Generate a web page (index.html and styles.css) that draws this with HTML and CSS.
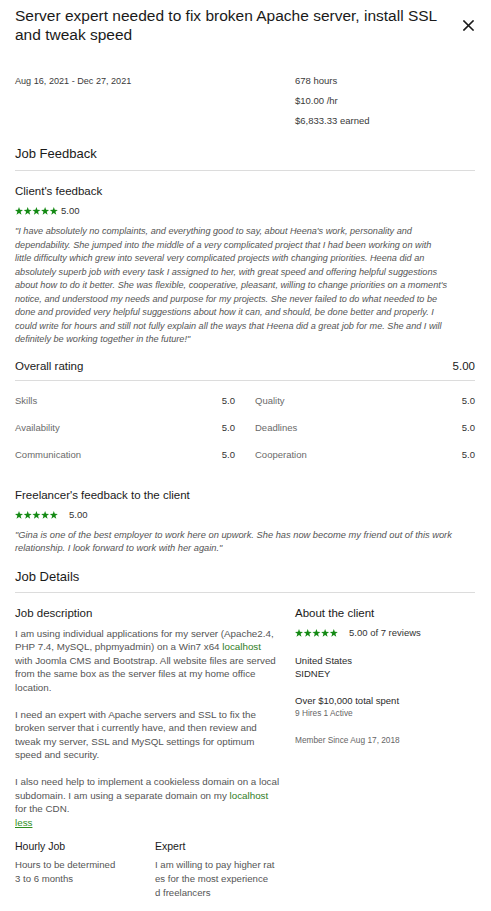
FILE: index.html
```html
<!DOCTYPE html>
<html lang="en">
<head>
<meta charset="utf-8">
<title>Job details</title>
<link rel="stylesheet" href="styles.css">
</head>
<body>
<div class="page">
  <header class="header">
    <h1 class="title">Server expert needed to fix broken Apache server, install SSL and tweak speed</h1>
    <button class="close" aria-label="Close">
      <svg width="11" height="11" viewBox="0 0 11 11"><path d="M1 1L10 10M10 1L1 10" stroke="#1a1a1a" stroke-width="1.6" stroke-linecap="square"/></svg>
    </button>
  </header>

  <section class="meta">
    <div class="meta-left">Aug 16, 2021 - Dec 27, 2021</div>
    <div class="meta-right">
      <div>678 hours</div>
      <div>$10.00 /hr</div>
      <div>$6,833.33 earned</div>
    </div>
  </section>

  <h2 class="section-title">Job Feedback</h2>

  <h3 class="sub-title first">Client's feedback</h3>
  <div class="rating">
    <svg class="stars" width="43" height="8" viewBox="0 0 43 8"><g fill="#148a14"><polygon id="st" points="4,0 5,2.8 8,2.9 5.6,4.8 6.5,7.8 4,6 1.5,7.8 2.4,4.8 0,2.9 3,2.8"/><use href="#st" x="8.7"/><use href="#st" x="17.4"/><use href="#st" x="26.1"/><use href="#st" x="34.8"/></g></svg><span class="score">5.00</span>
  </div>
  <p class="quote">"I have absolutely no complaints, and everything good to say, about Heena's work, personality and<br>dependability. She jumped into the middle of a very complicated project that I had been working on with<br>little difficulty which grew into several very complicated projects with changing priorities. Heena did an<br>absolutely superb job with every task I assigned to her, with great speed and offering helpful suggestions<br>about how to do it better. She was flexible, cooperative, pleasant, willing to change priorities on a moment's<br>notice, and understood my needs and purpose for my projects. She never failed to do what needed to be<br>done and provided very helpful suggestions about how it can, and should, be done better and properly. I<br>could write for hours and still not fully explain all the ways that Heena did a great job for me. She and I will<br>definitely be working together in the future!"</p>

  <div class="overall">
    <span>Overall rating</span>
    <span>5.00</span>
  </div>
  <div class="scores">
    <div class="score-row"><span>Skills</span><span class="val">5.0</span></div>
    <div class="score-row"><span>Quality</span><span class="val">5.0</span></div>
    <div class="score-row"><span>Availability</span><span class="val">5.0</span></div>
    <div class="score-row"><span>Deadlines</span><span class="val">5.0</span></div>
    <div class="score-row"><span>Communication</span><span class="val">5.0</span></div>
    <div class="score-row"><span>Cooperation</span><span class="val">5.0</span></div>
  </div>

  <h3 class="sub-title freelancer">Freelancer's feedback to the client</h3>
  <div class="rating">
    <svg class="stars" width="43" height="8" viewBox="0 0 43 8"><g fill="#148a14"><polygon id="st2" points="4,0 5,2.8 8,2.9 5.6,4.8 6.5,7.8 4,6 1.5,7.8 2.4,4.8 0,2.9 3,2.8"/><use href="#st2" x="8.7"/><use href="#st2" x="17.4"/><use href="#st2" x="26.1"/><use href="#st2" x="34.8"/></g></svg><span class="score wide">5.00</span>
  </div>
  <p class="quote short">"Gina is one of the best employer to work here on upwork. She has now become my friend out of this work relationship. I look forward to work with her again."</p>

  <h2 class="section-title details">Job Details</h2>

  <section class="details-grid">
    <div class="desc">
      <h3 class="sub-title">Job description</h3>
      <div class="desc-text">
        <p>I am using individual applications for my server (Apache2.4, PHP 7.4, MySQL, phpmyadmin) on a Win7 x64 <a class="link" href="#">localhost</a> with Joomla CMS and Bootstrap. All website files are served from the same box as the server files at my home office location.</p>
        <p>I need an expert with Apache servers and SSL to fix the broken server that i currently have, and then review and tweak my server, SSL and MySQL settings for optimum speed and security.</p>
        <p>I also need help to implement a cookieless domain on a local subdomain. I am using a separate domain on my <a class="link" href="#">localhost</a> for the CDN.<br><a class="less" href="#">less</a></p>
      </div>
      <div class="terms">
        <div class="term">
          <h4 class="term-title">Hourly Job</h4>
          <p class="term-text">Hours to be determined<br>3 to 6 months</p>
        </div>
        <div class="term">
          <h4 class="term-title">Expert</h4>
          <p class="term-text tall">I am willing to pay higher rat<br>es for the most experience<br>d freelancers</p>
        </div>
      </div>
    </div>
    <aside class="client">
      <h3 class="sub-title">About the client</h3>
      <div class="rating">
        <svg class="stars" width="43" height="8" viewBox="0 0 43 8"><g fill="#148a14"><polygon id="st3" points="4,0 5,2.8 8,2.9 5.6,4.8 6.5,7.8 4,6 1.5,7.8 2.4,4.8 0,2.9 3,2.8"/><use href="#st3" x="8.7"/><use href="#st3" x="17.4"/><use href="#st3" x="26.1"/><use href="#st3" x="34.8"/></g></svg><span class="score wide">5.00 of 7 reviews</span>
      </div>
      <div class="client-block">
        <div class="strong">United States</div>
        <div class="strong">SIDNEY</div>
      </div>
      <div class="client-block">
        <div class="strong">Over $10,000 total spent</div>
        <div class="small">9 Hires 1 Active</div>
      </div>
      <div class="client-block">
        <div class="small">Member Since Aug 17, 2018</div>
      </div>
    </aside>
  </section>
</div>
</body>
</html>
```

FILE: styles.css
```css
* { box-sizing: border-box; }

html, body {
  margin: 0;
  padding: 0;
  background: #fff;
}

body {
  font-family: "Liberation Sans", Arial, sans-serif;
  color: #1e1e1e;
}

h1, h2, h3, h4, p { margin: 0; font-weight: normal; }

.page {
  padding: 6px 16px 0 15px;
}

.header {
  display: flex;
  align-items: center;
  justify-content: space-between;
}

.title {
  font-size: 15.5px;
  line-height: 19px;
  width: 440px;
  color: #1a1a1a;
}

.close {
  border: 0;
  background: none;
  padding: 0;
  margin-right: 1px;
  width: 11px;
  height: 11px;
  display: flex;
}

.meta {
  display: grid;
  grid-template-columns: 1fr 180px;
  column-gap: 15px;
  margin-top: 27px;
  font-size: 9.5px;
  line-height: 20px;
  color: #3a3a3a;
}

.meta-left { font-size: 9.1px; }

.section-title {
  font-size: 13px;
  line-height: 20px;
  margin-top: 13px;
  padding-bottom: 6px;
  border-bottom: 1px solid #dcdcdc;
  color: #1a1a1a;
}

.section-title.details {
  margin-top: 11px;
  padding-bottom: 5px;
}

.sub-title {
  font-size: 11.5px;
  line-height: 18px;
  color: #1a1a1a;
}

.sub-title.first { margin-top: 11px; }
.sub-title.freelancer { margin-top: 24px; }

.rating {
  display: flex;
  align-items: center;
  margin-top: 4px;
  height: 14px;
}

.stars {
  display: block;
  flex: none;
}

.score {
  font-size: 9.5px;
  line-height: 14px;
  margin-left: 3px;
  color: #333;
}

.score.wide { margin-left: 11px; }

.quote {
  margin-top: 7px;
  font-size: 9.15px;
  line-height: 13.5px;
  font-style: italic;
  color: #555;
  white-space: nowrap;
}

.quote.short {
  white-space: normal;
  font-size: 9.3px;
}

.overall {
  display: flex;
  justify-content: space-between;
  margin-top: 10px;
  font-size: 11.5px;
  line-height: 18px;
  padding-bottom: 5px;
  border-bottom: 1px solid #dcdcdc;
  color: #1a1a1a;
}

.scores {
  display: grid;
  grid-template-columns: 1fr 1fr;
  column-gap: 20px;
  row-gap: 13px;
  margin-top: 13px;
  font-size: 9.5px;
  line-height: 14px;
}

.score-row {
  display: flex;
  justify-content: space-between;
  color: #6a6a6a;
}

.score-row .val { color: #333; }

.details-grid {
  display: grid;
  grid-template-columns: 1fr 180px;
  column-gap: 15px;
  margin-top: 11px;
}

.desc-text {
  margin-top: 5px;
  font-size: 9.8px;
  line-height: 13.5px;
  color: #555;
}

.desc-text p + p { margin-top: 13.5px; }

.link {
  color: #2f7d1e;
  text-decoration: none;
}

.less {
  color: #2f8f1e;
  text-decoration: underline;
}

.terms {
  display: grid;
  grid-template-columns: 125px 125px;
  column-gap: 15px;
  margin-top: 8px;
}

.term-title {
  font-size: 10.5px;
  line-height: 18px;
  color: #1a1a1a;
}

.term-text {
  margin-top: 3px;
  font-size: 9.6px;
  line-height: 13.5px;
  color: #555;
}

.term-text.tall { line-height: 14px; }

.client .rating { margin-top: 4px; }

.client-block {
  margin-top: 14px;
  font-size: 9.5px;
  line-height: 13px;
}

.client-block .strong { color: #2a2a2a; }

.client-block .small {
  font-size: 8.3px;
  line-height: 12px;
  color: #666;
}

.client-block:last-child { margin-top: 15px; }
```
